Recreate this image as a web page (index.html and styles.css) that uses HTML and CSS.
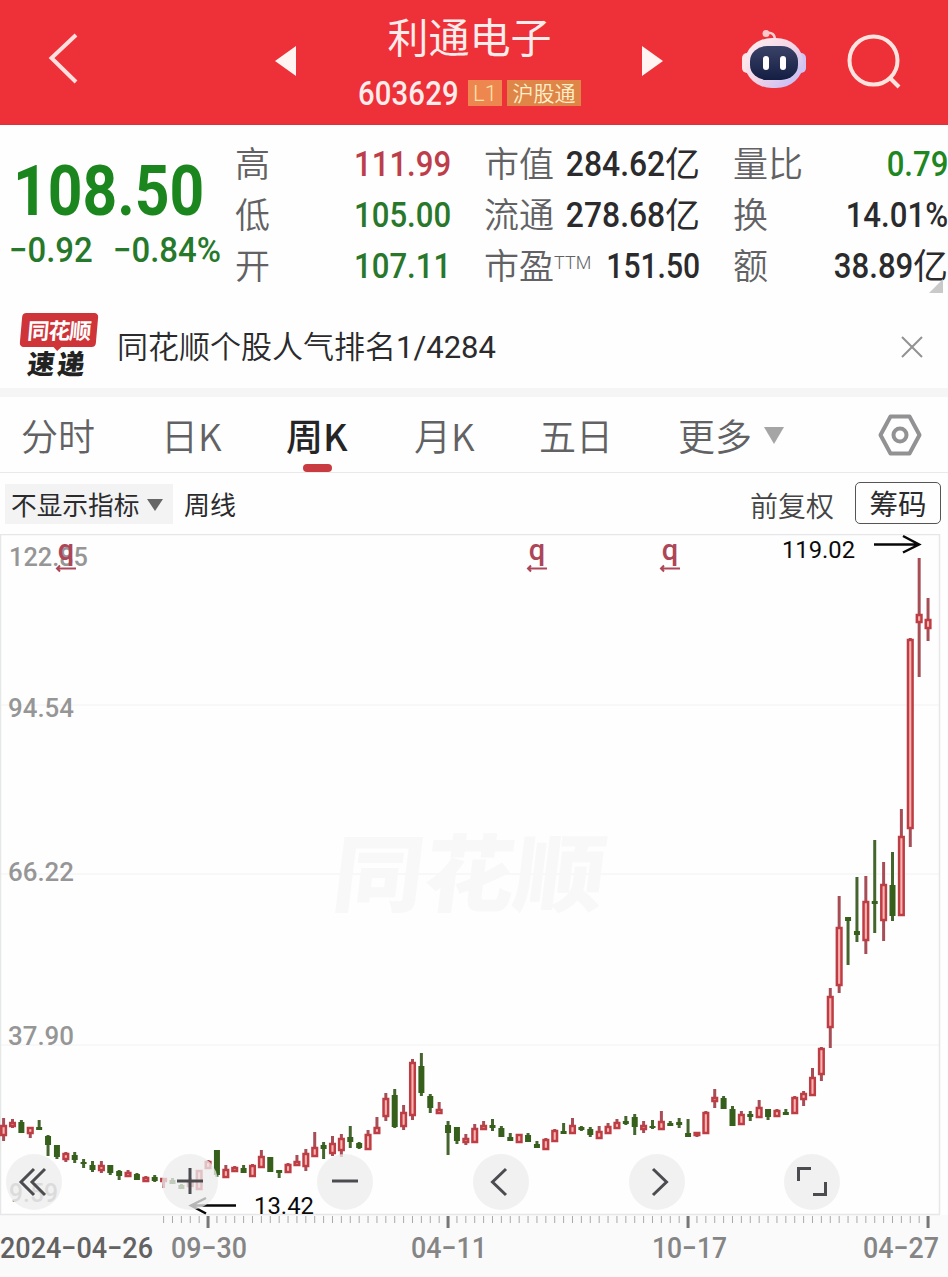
FILE: index.html
```html
<!DOCTYPE html>
<html lang="zh-CN">
<head>
<meta charset="utf-8">
<title>利通电子 603629</title>
<link rel="stylesheet" href="styles.css">
</head>
<body>
<header class="topbar">
  <svg class="back" viewBox="0 0 32 52"><path d="M29 3 4.500 26 29 50"/></svg>
  <svg class="tri prev" viewBox="0 0 22 32"><path d="M0 16 21 1V31Z"/></svg>
  <div class="stock">
    <h1>利通电子</h1>
    <div class="code-row"><span class="code">603629</span><span class="tag tag-l1">L1</span><span class="tag tag-hk">沪股通</span></div>
  </div>
  <svg class="tri next" viewBox="0 0 22 32"><path d="M21 16 0 1V31Z"/></svg>
  <svg class="robot" viewBox="0 0 66 60">
    <defs>
      <linearGradient id="shell" x1="0" y1="0" x2="1" y2="1"><stop offset="0" stop-color="#fff1f2"/><stop offset=".5" stop-color="#f3d5e6"/><stop offset="1" stop-color="#b9b8fa"/></linearGradient>
      <linearGradient id="visor" x1="0" y1="0" x2="0" y2="1"><stop offset="0" stop-color="#3a4268"/><stop offset="1" stop-color="#141d42"/></linearGradient>
    </defs>
    <path d="M25 4c6-1 9 1 9 8" fill="none" stroke="#fbd0d2" stroke-width="2.500"/>
    <circle cx="25" cy="4.500" r="3.500" fill="#fbc9cc"/>
    <rect x="1" y="24" width="10" height="20" rx="5" fill="#ffe3e6"/>
    <rect x="55" y="24" width="10" height="20" rx="5" fill="#cfc3f5"/>
    <rect x="4" y="9" width="58" height="50" rx="27" ry="24" fill="url(#shell)"/>
    <rect x="9" y="17" width="48" height="34" rx="17" ry="15" fill="url(#visor)"/>
    <rect x="22" y="27" width="6" height="14" rx="3" fill="#fff"/>
    <rect x="39" y="27" width="6" height="14" rx="3" fill="#fff"/>
  </svg>
  <svg class="search" viewBox="0 0 56 56"><circle cx="26.500" cy="26.500" r="24"/><path d="m43 44 9 9"/></svg>
</header>

<section class="quote">
  <div class="price-box">
    <div class="price">108.50</div>
    <div class="change"><span class="din">−0.92</span><span class="din pct">−0.84%</span></div>
  </div>
  <dl class="col col-a">
    <div><dt>高</dt><dd class="din red">111.99</dd></div>
    <div><dt>低</dt><dd class="din green">105.00</dd></div>
    <div><dt>开</dt><dd class="din green">107.11</dd></div>
  </dl>
  <dl class="col col-b">
    <div><dt>市值</dt><dd><span class="din">284.62</span><b>亿</b></dd></div>
    <div><dt>流通</dt><dd><span class="din">278.68</span><b>亿</b></dd></div>
    <div><dt>市盈<sup>TTM</sup></dt><dd class="din pe">151.50</dd></div>
  </dl>
  <dl class="col col-c">
    <div><dt>量比</dt><dd class="din bright">0.79</dd></div>
    <div><dt>换</dt><dd class="din">14.01%</dd></div>
    <div><dt>额</dt><dd><span class="din">38.89</span><b>亿</b></dd></div>
  </dl>
  <span class="corner"></span>
</section>

<section class="notice">
  <div class="logo"><span class="logo-top">同花顺</span><span class="logo-bottom">速递</span></div>
  <p>同花顺个股人气排名<span class="rank">1/4284</span></p>
  <svg class="close" viewBox="0 0 22 22"><path d="m1 1 20 20M21 1 1 21"/></svg>
</section>

<nav class="tabs">
  <span>分时</span><span>日K</span><span class="active">周K</span><span>月K</span><span>五日</span><span class="more">更多<i></i></span>
  <svg class="gear" viewBox="0 0 44 42"><path d="M12.500 2.500h19L41.500 21l-10 18.500h-19L2.500 21Z"/><circle cx="22" cy="21" r="6.500"/></svg>
</nav>

<div class="toolbar">
  <span class="indicator">不显示指标<i></i></span>
  <span class="period">周线</span>
  <span class="adjust">前复权</span>
  <span class="chips">筹码</span>
</div>

<main class="chart">
  <svg class="plot" viewBox="0 534 948 743">
    <rect class="axis-band" x="0" y="1215" width="948" height="62"/>
    <path class="grid" d="M0 705H939M0 874H939M0 1045H939"/>
    <text class="watermark" transform="translate(330 905) skewX(-7)" textLength="272" lengthAdjust="spacingAndGlyphs">同花顺</text>
    <path class="frame" d="M.5 1214V534.500H939.500V1214"/>
    <path class="base" d="M0 1214.500H940"/>
    <g class="scale">
      <text x="9" y="566" textLength="79" lengthAdjust="spacingAndGlyphs">122.85</text>
      <text x="8" y="717" textLength="66" lengthAdjust="spacingAndGlyphs">94.54</text>
      <text x="8" y="881" textLength="66" lengthAdjust="spacingAndGlyphs">66.22</text>
      <text x="8" y="1045" textLength="66" lengthAdjust="spacingAndGlyphs">37.90</text>
      <text class="faint" x="9" y="1202" textLength="49" lengthAdjust="spacingAndGlyphs">9.59</text>
    </g>
    <g id="candles"></g>
    <g id="ticks"></g>
    <g class="event"><text x="66" y="560">q</text><path d="M57 568.500H76M60 565.500l-3 3 3 3"/></g>
    <g class="event"><text x="537" y="560">q</text><path d="M528 568.500H547M531 565.500l-3 3 3 3"/></g>
    <g class="event"><text x="670" y="560">q</text><path d="M661 568.500H680M664 565.500l-3 3 3 3"/></g>
    <g class="extreme">
      <text x="782" y="558" textLength="73" lengthAdjust="spacingAndGlyphs">119.02</text>
      <path d="M874 544.500H919M903 536l16 8.500-16 8"/>
      <text x="254" y="1214" textLength="60" lengthAdjust="spacingAndGlyphs">13.42</text>
      <path d="M236 1205.500H192M206 1198l-15 7.500 15 8"/>
    </g>
    <g class="dates">
      <text class="first" x="0" y="1258" textLength="153" lengthAdjust="spacingAndGlyphs">2024−04−26</text>
      <text x="171" y="1258" textLength="76" lengthAdjust="spacingAndGlyphs">09−30</text>
      <text x="411" y="1258" textLength="76" lengthAdjust="spacingAndGlyphs">04−11</text>
      <text x="652" y="1258" textLength="75" lengthAdjust="spacingAndGlyphs">10−17</text>
      <text x="863" y="1258" textLength="76" lengthAdjust="spacingAndGlyphs">04−27</text>
    </g>
  </svg>
  <div class="controls">
    <button><svg viewBox="0 0 56 56"><path d="M28 15 15 28l13 13M39 15 26 28l13 13"/></svg></button>
    <button><svg viewBox="0 0 56 56"><path d="M15 27H41M28 14V40"/></svg></button>
    <button><svg viewBox="0 0 56 56"><path d="M15 27H41"/></svg></button>
    <button><svg viewBox="0 0 56 56"><path d="M33 15 19.500 28 33 41"/></svg></button>
    <button><svg viewBox="0 0 56 56"><path d="M24 15 37.500 28 24 41"/></svg></button>
    <button><svg viewBox="0 0 56 56"><path d="M14.500 27V14.500H27M41.500 28V40.500H29"/></svg></button>
  </div>
</main>
<script src="chart.js"></script>
</body>
</html>
```
FILE: styles.css
```css
* { box-sizing: border-box; }
body { margin: 0; width: 948px; height: 1277px; overflow: hidden; background: #fefefe; color: #2b2b2d; font-family: "Noto Sans CJK SC", sans-serif; }
h1, p, dl, dd { margin: 0; font-weight: 400; }

.topbar { height: 125px; background: #ee3038; border-bottom: 1px solid #d8343c; display: flex; align-items: flex-start; color: #ffeceb; }
.topbar svg { flex: none; }
.back { width: 32px; height: 52px; margin: 32px 0 0 47px; fill: none; stroke: #ffe0de; stroke-width: 4; }
.tri { width: 22px; height: 32px; margin-top: 45px; fill: #fff4f2; }
.prev { margin-left: 196px; }
.stock { width: 345px; display: flex; flex-direction: column; align-items: center; }
.stock h1 { font-size: 41px; line-height: 60px; margin-top: 5px; }
.code-row { display: flex; align-items: center; height: 26px; margin-top: 15px; }
.code { width: 110px; font: 500 34px/26px Roboto, sans-serif; transform: scaleX(.86); transform-origin: left; letter-spacing: .2px; }
.tag { height: 26px; font-size: 21px; line-height: 24px; text-align: center; background: #ee8650; color: #ffe2a8; font-weight: 350; }
.tag-l1 { width: 34px; margin-right: 5px; font: 300 22px/27px Roboto, sans-serif; }
.tag-hk { width: 74px; background: #e08548; color: #fff0cb; }
.robot { width: 66px; height: 60px; margin: 29px 0 0 77px; }
.search { width: 56px; height: 56px; margin: 34px 0 0 40px; fill: none; stroke: #ffe3df; stroke-width: 4; }

.din { display: inline-block; font-family: Roboto, sans-serif; font-weight: 500; transform: scaleX(.89); transform-origin: right; }
.red { color: #bd3d4a; }
.green { color: #28772b; }
.bright { color: #20861f; }
.quote { height: 175px; display: grid; grid-template-columns: 235px 249px 249px 215px; position: relative; }
.price-box { color: #1b861d; padding: 31px 0 0 13px; }
.price { font: 700 70px/70px Roboto, sans-serif; transform: scaleX(.865); transform-origin: left; }
.change { display: flex; font-size: 35px; line-height: 50px; margin-left: -4px; color: #26792a; }
.change .din { transform: scaleX(.94); transform-origin: left; width: 104px; white-space: nowrap; }
.col { padding-top: 14px; font-size: 35px; }
.col > div { height: 51px; display: flex; justify-content: space-between; line-height: 51px; white-space: nowrap; }
.col dt { font-weight: 350; color: #626264; line-height: 46px; }
.col sup { font: 300 18px/20px Roboto, sans-serif; vertical-align: 10px; }
.col dd { display: flex; margin-left: -20px; }
.col b { font-weight: 400; line-height: 46px; }
.col dd.pe { transform: scaleX(.86); }
.col-a { padding-right: 33px; }
.col-b { padding-right: 33px; }
.col-b span.din { transform: scaleX(.91); }
.corner { position: absolute; right: 5px; top: 154px; border-left: 14px solid transparent; border-bottom: 14px solid #c9c9c9; }

.notice { height: 97px; display: flex; align-items: flex-start; border-bottom: 9px solid #f5f5f5; padding: 13px 25px 0 19px; }
.logo { width: 79px; display: flex; flex-direction: column; align-items: center; position: relative; font-weight: 900; }
.logo-top { width: 76px; height: 34px; background: #cf3439; color: #fff; border-radius: 4px; transform: skewX(-5deg); font-weight: 700; font-size: 22px; line-height: 32px; text-align: center; letter-spacing: -1px; }
.logo-top::after { content: ""; position: absolute; left: 33px; top: 33px; border: 5px solid transparent; border-top-color: #cf3439; }
.logo-bottom { font-size: 27px; line-height: 31px; letter-spacing: 3px; color: #222; transform: skewX(-7deg); margin-left: -1px; }
.notice p { font-size: 31px; line-height: 42px; margin: 11px 0 0 19px; flex: 1; font-weight: 350; white-space: nowrap; }
.rank { font: 400 31px Roboto, sans-serif; }
.close { width: 22px; height: 22px; margin-top: 23px; fill: none; stroke: #929292; stroke-width: 2; }

.tabs { height: 76px; border-bottom: 1px solid #e9e9eb; display: grid; grid-template-columns: 140px 125px 128px 125px 139px 199px 44px; padding-left: 21px; font-size: 37px; line-height: 76px; font-weight: 350; color: #626264; }
.tabs span { white-space: nowrap; position: relative; }
.tabs .active { font-weight: 500; color: #252527; }
.active::after { content: ""; position: absolute; left: 17px; top: 67px; width: 29px; height: 8px; border-radius: 4px; background: #c83b40; }
.tabs i, .indicator i { display: inline-block; border: 10px solid transparent; border-top: 17px solid #a5a5a5; border-bottom: 0; margin-left: 12px; vertical-align: 7px; }
.gear { width: 44px; height: 42px; margin: 17px 0 0 1px; fill: none; stroke: #929294; stroke-width: 4; stroke-linejoin: round; }

.toolbar { height: 61px; display: flex; align-items: flex-start; padding: 9px 7px 0 5px; line-height: 42px; }
.indicator { width: 168px; height: 40px; margin-top: 2px; padding-left: 6px; line-height: 39px; background: #f3f3f4; font-size: 25.700px; white-space: nowrap; }
.indicator i { border-width: 12px 8px 0; border-top-color: #666; margin-left: 8px; vertical-align: 4px; }
.period { font-size: 26px; margin-left: 11px; line-height: 43px; }
.adjust { font-size: 28px; margin-left: auto; margin-right: 21px; line-height: 47px; font-weight: 350; color: #444; }
.chips { width: 86px; height: 42px; border: 1px solid #555; border-radius: 5px; font-size: 28.500px; text-align: center; line-height: 40px; }

.chart { height: 743px; position: relative; }
.plot { display: block; width: 948px; height: 743px; }
.axis-band { fill: #fafafa; }
.grid { stroke: #f6f6f6; stroke-width: 1.500; }
.frame, .base { fill: none; stroke: #e6e7e9; stroke-width: 1.500; }
.watermark { font: 900 84px "Noto Sans CJK SC", sans-serif; fill: #f8f8f8; }
.scale { font: 500 26px Roboto, sans-serif; fill: #969696; }
.faint { fill: #a4a4a4; }
.event text { font: 500 29px Roboto, sans-serif; text-anchor: middle; fill: #ad4658; }
.event path { fill: none; stroke: #ad4658; stroke-width: 2; }
.extreme text { font: 400 24px Roboto, sans-serif; fill: #0b0b0b; }
.extreme path { fill: none; stroke: #080808; stroke-width: 2.500; }
.dates { font: 500 29px Roboto, sans-serif; fill: #858585; }
.dates .first { fill: #626262; }
.up-body { fill: #ffb4b2; stroke: #bd3d45; stroke-width: 2.500; }
.up-wick { stroke: #a64d56; stroke-width: 3; }
.down-body { fill: #375f1c; }
.down-wick { stroke: #45652e; stroke-width: 3; }
.tick { stroke: #a9a9a9; stroke-width: 1; }
.tick-major { stroke: #777; stroke-width: 3; }
.controls { position: absolute; left: 6px; top: 620px; display: flex; gap: 99.700px; }
.controls button { width: 56px; height: 56px; padding: 0; border: 0; border-radius: 50%; background: rgba(236, 236, 237, .76); }
.controls svg { display: block; width: 56px; height: 56px; fill: none; stroke: #4c4c50; stroke-width: 3; }
```
FILE: chart.js
```js
// Weekly candles: direction (1 up, 0 down), high, body top, body bottom, low.
const candles = [
[1,1118,1125,1135,1141],[1,1119,1122,1126,1128],[0,1120,1122,1133,1133],[1,1127,1127,1133,1138],[0,1120,1127,1130,1130],
[0,1135,1136,1145,1156],[0,1145,1145,1157,1159],[1,1152,1153,1159,1162],[0,1152,1155,1160,1163],[0,1159,1162,1164,1168],
[0,1161,1165,1170,1172],[1,1161,1165,1170,1173],[0,1165,1165,1173,1175],[0,1170,1171,1176,1180],[1,1170,1172,1176,1177],
[0,1173,1174,1180,1180],[1,1176,1177,1181,1181],[0,1175,1177,1181,1182],[1,1178,1178,1181,1188],[0,1178,1180,1184,1184],
[0,1184,1185,1189,1189],[1,1178,1180,1186,1187],[1,1170,1170,1189,1189],[1,1160,1161,1168,1168],[0,1150,1150,1175,1177],
[1,1165,1169,1177,1177],[1,1166,1167,1171,1171],[0,1165,1168,1173,1173],[1,1164,1165,1176,1176],[1,1150,1156,1167,1167],
[0,1157,1157,1172,1172],[0,1170,1170,1173,1178],[1,1163,1164,1172,1172],[1,1155,1161,1165,1165],[1,1149,1153,1166,1171],
[1,1132,1147,1156,1156],[0,1142,1145,1149,1159],[1,1136,1143,1153,1156],[1,1134,1138,1150,1157],[0,1126,1137,1142,1148],
[0,1142,1143,1148,1149],[1,1130,1134,1149,1149],[1,1117,1127,1133,1133],[1,1093,1098,1116,1121],[0,1089,1095,1127,1128],
[1,1105,1112,1126,1130],[1,1059,1062,1115,1120],[0,1053,1066,1093,1096],[0,1094,1096,1108,1113],[1,1102,1109,1113,1113],
[0,1121,1125,1133,1155],[0,1127,1127,1141,1144],[1,1134,1138,1142,1145],[1,1124,1128,1142,1142],[1,1121,1125,1129,1129],
[0,1119,1125,1128,1131],[0,1126,1128,1137,1137],[0,1133,1137,1141,1141],[1,1134,1134,1142,1142],[0,1133,1135,1142,1142],
[0,1141,1144,1148,1148],[1,1138,1139,1149,1150],[1,1129,1130,1141,1141],[0,1123,1131,1134,1134],[1,1118,1125,1133,1133],
[0,1126,1127,1130,1131],[0,1127,1129,1135,1137],[1,1126,1131,1138,1138],[1,1123,1126,1133,1133],[1,1119,1122,1128,1128],
[0,1116,1121,1124,1125],[0,1114,1117,1127,1135],[1,1121,1125,1129,1133],[0,1120,1126,1128,1129],[1,1111,1121,1129,1129],
[0,1121,1123,1126,1126],[0,1118,1122,1125,1128],[0,1119,1133,1137,1137],[1,1132,1132,1135,1137],[1,1111,1112,1133,1133],
[1,1089,1097,1101,1108],[0,1096,1098,1109,1109],[0,1106,1109,1126,1126],[1,1111,1114,1124,1125],[0,1111,1114,1117,1121],
[1,1100,1107,1117,1118],[0,1109,1109,1117,1120],[1,1109,1110,1116,1117],[0,1109,1112,1115,1115],[1,1096,1097,1113,1114],
[1,1091,1093,1099,1106],[1,1068,1077,1095,1096],[1,1047,1048,1074,1081],[1,988,996,1027,1048],[1,896,927,985,993],
[0,917,917,921,965],[0,877,931,935,942],[1,876,901,940,954],[0,840,901,904,933],[1,862,884,920,941],
[0,852,885,916,921],[1,809,836,915,915],[1,638,639,828,847],[1,558,614,622,677],[1,598,619,628,641]
];
const NS = "http://www.w3.org/2000/svg";
const STEP = 8.889;
function add(parent, tag, attrs) {
  const el = document.createElementNS(NS, tag);
  for (const k in attrs) el.setAttribute(k, attrs[k]);
  parent.appendChild(el);
}
const layer = document.getElementById("candles");
candles.forEach(([up, high, top, bottom, low], i) => {
  const x = 3.6 + i * STEP;
  add(layer, "line", { class: up ? "up-wick" : "down-wick", x1: x, x2: x, y1: high, y2: low });
  if (up) add(layer, "rect", { class: "up-body", x: x - 2.3, y: top + 1, width: 4.6, height: Math.max(1.5, bottom - top - 1) });
  else add(layer, "rect", { class: "down-body", x: x - 3, y: top, width: 6, height: bottom - top });
});
const ticks = document.getElementById("ticks");
for (let n = 18; n <= 104; n++) {
  const x = 3.6 + n * STEP;
  const major = (n - 23) % 27 === 0;
  add(ticks, "line", { class: major ? "tick-major" : "tick", x1: x, x2: x, y1: 1216, y2: major ? 1228 : 1223 });
}
```
